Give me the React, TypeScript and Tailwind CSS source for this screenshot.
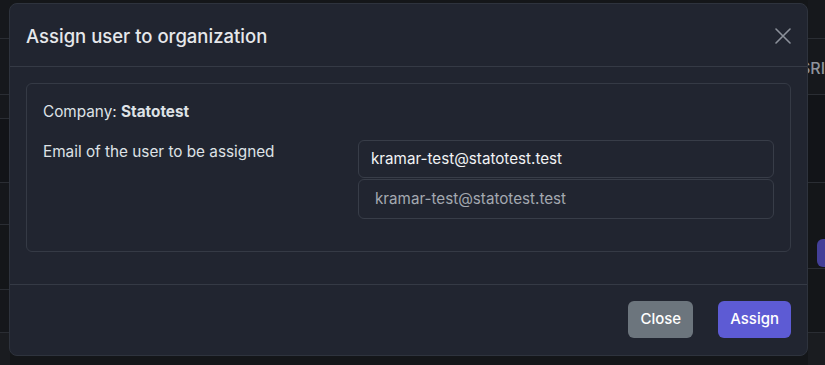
import React from "react";

function CloseIcon() {
  return (
    <svg width="16" height="16" viewBox="0 0 16 16" fill="none">
      <path d="M1 1L15 15M15 1L1 15" stroke="#8c919a" strokeWidth="1.6" strokeLinecap="round" />
    </svg>
  );
}

function Backdrop() {
  return (
    <div className="flex h-[365px] w-full bg-[#141619]">
      <div className="flex w-[10px] flex-col">
        <div className="h-[39px] border-b border-[#2a2d33] bg-[#16181c]" />
        <div className="h-[56px] border-b border-[#2a2d33] bg-[#16181c]" />
        <div className="h-[24px] border-b border-[#2a2d33] bg-[#16181c]" />
        <div className="h-[64px] border-b border-[#2a2d33] bg-[#121418]" />
        <div className="h-[42px] border-b border-[#2a2d33] bg-[#15171b]" />
        <div className="h-[65px] border-b border-[#2a2d33] bg-[#141619]" />
        <div className="h-[43px] border-b border-[#2a2d33] bg-[#15171b]" />
        <div className="flex-1 bg-[#1a1c20]" />
      </div>
      <div className="flex-1" />
      <div className="flex w-[17px] flex-col">
        <div className="h-[39px] border-b border-[#2a2d33] bg-[#16181c]" />
        <div className="flex h-[56px] items-center border-b border-[#2a2d33] bg-[#16181c] pt-[2px]">
          <span className="-ml-[8px] whitespace-nowrap text-[16px] font-medium leading-none text-[#8e949c]">SRI</span>
        </div>
        <div className="h-[88px] border-b border-[#2a2d33] bg-[#121418]" />
        <div className="flex h-[86px] flex-col justify-end border-b border-[#2a2d33] bg-[#141619]">
          <div className="mb-[1px] ml-[9px] h-[28px] w-[20px] rounded-l-[6px] bg-[#433f98]" />
        </div>
        <div className="h-[64px] border-b border-[#2a2d33] bg-[#141619]" />
        <div className="flex-1 bg-[#1a1c20]" />
      </div>
    </div>
  );
}

export default function App() {
  return (
    <div className="relative h-[365px] w-[825px] overflow-hidden font-['Inter',sans-serif] text-[#dee2e6]">
      <Backdrop />

      <div className="absolute left-[9px] top-[3px] w-[799px] rounded-[8px] border border-[#2e333d] bg-[#212530]">
        <div className="flex items-center justify-between border-b border-[#353a45] p-4 pt-[17px] pb-[15px]">
          <h5 className="text-[18.5px] font-medium leading-[30px] text-[#e6e8eb]">
            Assign user to organization
          </h5>
          <button className="flex h-4 w-4 items-center justify-center">
            <CloseIcon />
          </button>
        </div>

        <div className="p-4">
          <div className="mb-4 rounded-[6px] border border-[#353a45] p-4">
            <p className="mb-4 text-[15.3px] leading-6">
              Company: <span className="font-bold">Statotest</span>
            </p>
            <div className="mb-4 grid grid-cols-[303px_1fr] gap-x-3">
              <label className="text-[15.3px] leading-6">Email of the user to be assigned</label>
              <div className="flex flex-col gap-px">
                <div className="flex h-[38px] items-center rounded-[6px] border border-[#383d48] px-3 text-[15.2px] text-[#f1f3f5]">
                  kramar-test@statotest.test
                </div>
                <div className="flex h-[40px] items-center rounded-[6px] border border-[#383d48] px-4 text-[15.2px] text-[#a4a9b0]">
                  kramar-test@statotest.test
                </div>
              </div>
            </div>
          </div>
        </div>

        <div className="flex items-center justify-end gap-[25px] border-t border-[#353a45] px-4 pb-[17px] pt-4">
          <button className="h-[37px] rounded-[6px] bg-[#6c757d] px-3 text-[15px] font-medium text-white">
            Close
          </button>
          <button className="h-[37px] rounded-[6px] bg-[#5d5bd4] px-3 text-[15px] font-medium text-white">
            Assign
          </button>
        </div>
      </div>
    </div>
  );
}
